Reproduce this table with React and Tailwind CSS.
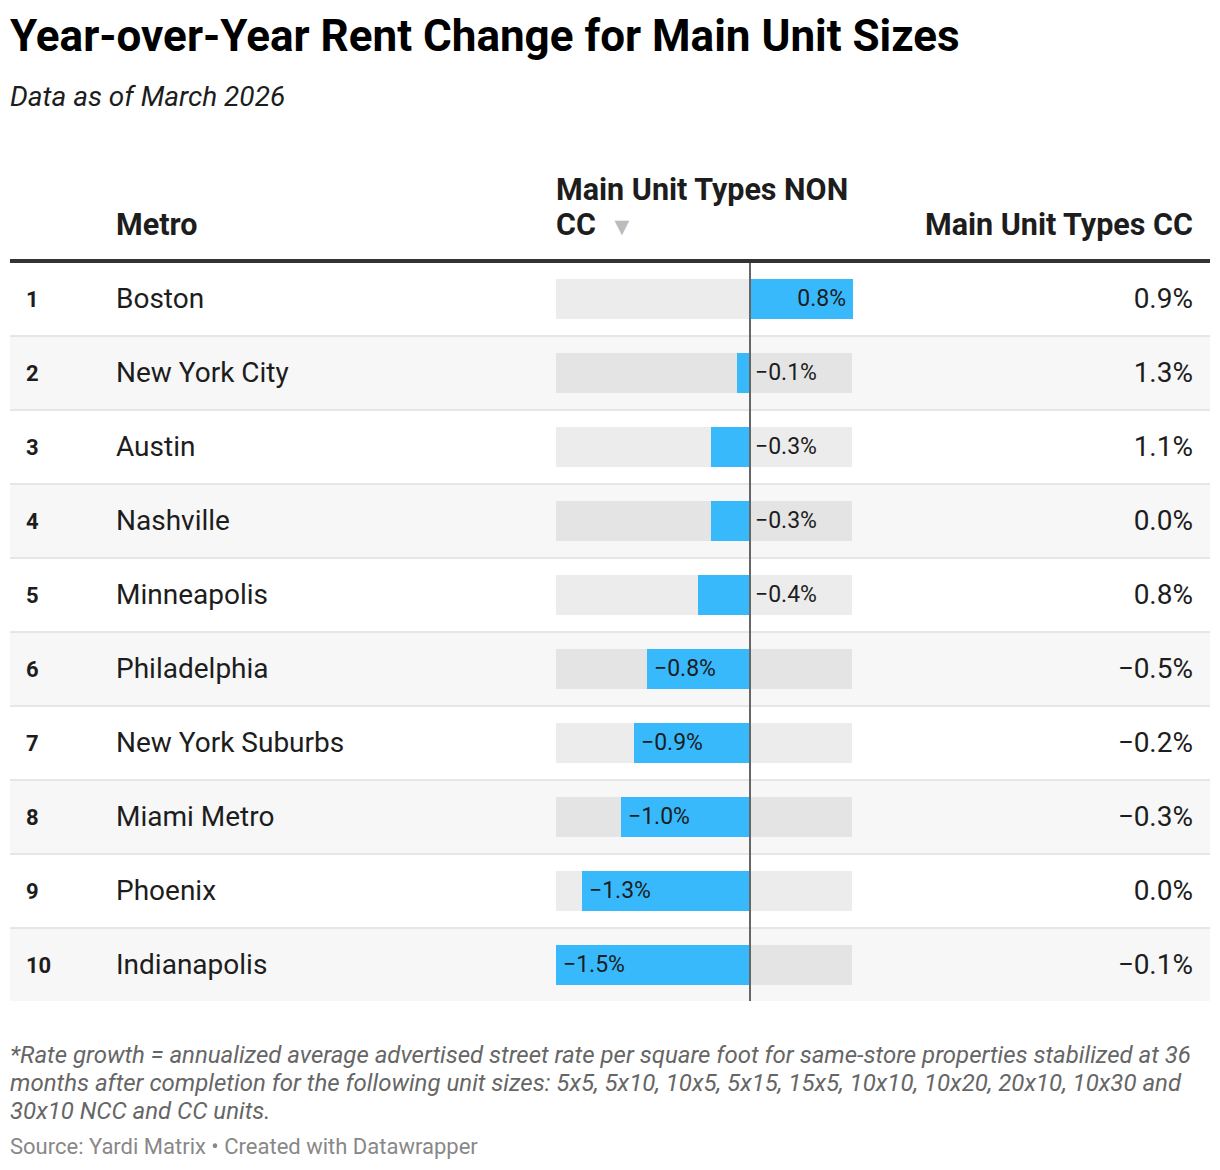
import React from "react";

const rows = [
  { rank: 1, metro: "Boston", ncc: 0.8, cc: "0.9%" },
  { rank: 2, metro: "New York City", ncc: -0.1, cc: "1.3%" },
  { rank: 3, metro: "Austin", ncc: -0.3, cc: "1.1%" },
  { rank: 4, metro: "Nashville", ncc: -0.3, cc: "0.0%" },
  { rank: 5, metro: "Minneapolis", ncc: -0.4, cc: "0.8%" },
  { rank: 6, metro: "Philadelphia", ncc: -0.8, cc: "\u22120.5%" },
  { rank: 7, metro: "New York Suburbs", ncc: -0.9, cc: "\u22120.2%" },
  { rank: 8, metro: "Miami Metro", ncc: -1.0, cc: "\u22120.3%" },
  { rank: 9, metro: "Phoenix", ncc: -1.3, cc: "0.0%" },
  { rank: 10, metro: "Indianapolis", ncc: -1.5, cc: "\u22120.1%" },
];

// px per percentage point, zero sits 194px into the 296px track
const SCALE = 129;
const ZERO = 194;

const fmt = (v) => (v < 0 ? "\u2212" : "") + Math.abs(v).toFixed(1) + "%";

const Bar = ({ value }) => {
  const w = Math.round(Math.abs(value) * SCALE);
  const inside = w > 80;
  return (
    <div className="relative h-[40px] w-[296px] bg-black/[0.075]">
      {value >= 0 ? (
        <div
          className="absolute top-0 h-full bg-[#38b9fc] flex items-center justify-end pr-[7px]"
          style={{ left: ZERO, width: w }}
        >
          <span className="text-[23px] text-[#1d1d1d]">{fmt(value)}</span>
        </div>
      ) : (
        <>
          <div
            className="absolute top-0 h-full bg-[#38b9fc] flex items-center pl-[7px]"
            style={{ left: ZERO - w, width: w }}
          >
            {inside && <span className="text-[23px] text-[#1d1d1d]">{fmt(value)}</span>}
          </div>
          {!inside && (
            <span
              className="absolute top-0 h-full flex items-center text-[23px] text-[#1d1d1d]"
              style={{ left: ZERO + 5 }}
            >
              {fmt(value)}
            </span>
          )}
        </>
      )}
    </div>
  );
};

export default function App() {
  return (
    <div className="w-[1220px] bg-white px-[10px] pt-[10px] pb-[10px] text-[#1d1d1d] font-['Roboto',sans-serif]">
      <h1 className="text-[44px] font-bold leading-[52px] text-black">
        Year-over-Year Rent Change for Main Unit Sizes
      </h1>
      <p className="mt-[18px] text-[28px] italic leading-[34px] text-[#1d1d1d]">Data as of March 2026</p>

      <div className="mt-[58px]">
        <div className="grid grid-cols-[106px_440px_296px_358px] items-end pb-[17px] text-[30.5px] font-bold leading-[35px] border-b-4 border-[#333]">
          <div></div>
          <div>Metro</div>
          <div className="whitespace-nowrap">
            Main Unit Types NON
            <br />
            CC <span className="inline-block text-[25px] leading-[20px] text-[#bbbbbb] ml-[6px]">▼</span>
          </div>
          <div className="text-right pr-[17px]">Main Unit Types CC</div>
        </div>

        <div className="relative">
          {rows.map((r, i) => (
            <div
              key={r.rank}
              className={
                "grid grid-cols-[106px_440px_296px_358px] items-center h-[72px] " +
                (i > 0 ? "box-content border-t-2 border-[#e6e6e6] " : "") +
                (i % 2 === 1 ? "bg-[#f7f7f7]" : "bg-white")
              }
            >
              <div className="pl-[16px] text-[22px] font-bold">{r.rank}</div>
              <div className="text-[28px]">{r.metro}</div>
              <Bar value={r.ncc} />
              <div className="text-right pr-[17px] text-[28px]">{r.cc}</div>
            </div>
          ))}
          <div className="absolute top-0 bottom-0 left-[739px] w-[2px] bg-[#666]"></div>
        </div>
      </div>

      <p className="mt-[40px] text-[24px] italic leading-[28px] text-[#666] pr-[14px]">
        *Rate growth = annualized average advertised street rate per square foot for same-store properties stabilized at 36 months after completion for the following unit sizes: 5x5, 5x10, 10x5, 5x15, 15x5, 10x10, 10x20, 20x10, 10x30 and 30x10 NCC and CC units.
      </p>
      <p className="mt-[8px] text-[22px] leading-[28px] text-[#888]">
        Source: Yardi Matrix • Created with Datawrapper
      </p>
    </div>
  );
}
